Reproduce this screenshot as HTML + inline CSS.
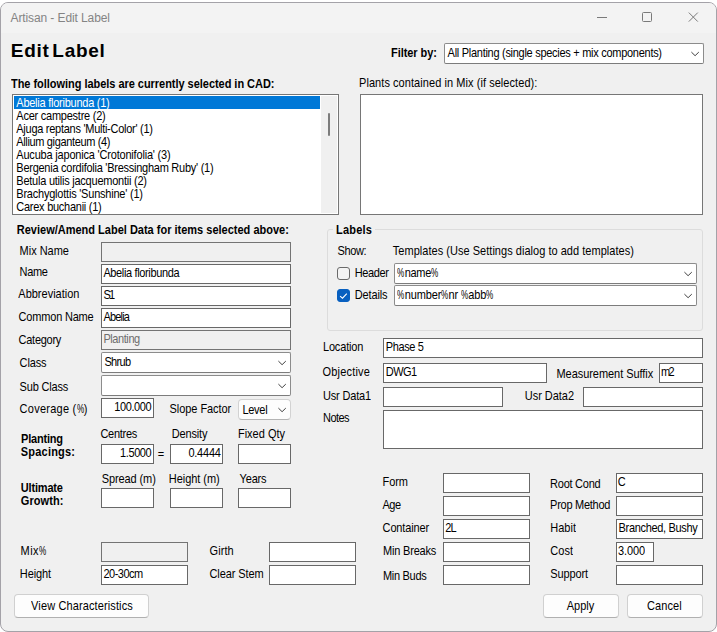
<!DOCTYPE html>
<html><head><meta charset="utf-8"><title>Artisan - Edit Label</title><style>
html,body{margin:0;padding:0;}
body{width:717px;height:632px;overflow:hidden;background:#fff;font-family:"Liberation Sans",sans-serif;font-size:11px;color:#000;position:relative;}
#w{position:absolute;left:0;top:2px;width:717px;height:630px;box-sizing:border-box;background:#f0f0f0;border:1px solid #a4a2a8;border-radius:8px;overflow:hidden;}
#tb{position:absolute;left:0;top:0;width:715px;height:30px;background:#f3f3f3;}
#ct{position:absolute;left:-1px;top:-3px;width:717px;height:632px;}
.l{position:absolute;white-space:nowrap;line-height:13px;}
.s{transform-origin:0 10px;transform:scaleY(1.13);}
.b{font-weight:bold;}
.p{display:inline-block;width:7.34px;transform:scaleX(.74);transform-origin:0 0;}
.i,.c,.c2,.bt,.lb,.gb,.cb{position:absolute;box-sizing:border-box;}
.i{border:1px solid #686868;background:#fff;}
.i.d{background:#f0f0f0;border-color:#747474;}
.c{border:1px solid #8c8c8c;border-bottom-color:#7c7c7c;background:#fff;border-radius:2px;}
.c2{border:1px solid #d2d2d2;border-bottom-color:#b4b4b4;background:#fdfdfd;border-radius:4px;}
.ar{position:absolute;}
.bt{border:1px solid #d0d0d0;border-bottom-color:#b0b0b0;border-radius:4px;background:#fdfdfd;}
.lb{border:1px solid #767676;background:#fff;}
.sel{position:absolute;background:#0078d7;}
.sb{position:absolute;background:#f0f0f0;}
.th{position:absolute;left:7px;top:17px;width:2px;height:23px;background:#7c7c7c;border-radius:1px;}
.gb{border:1px solid #dcdcdc;border-radius:3px;}
.gbl{position:absolute;background:#f0f0f0;}
.cb{border:1px solid #6a6a6a;border-radius:3px;background:#f4f4f4;}
.cb.on{background:#0860c0;border-color:#0860c0;}
</style></head>
<body><div id="w"><div id="tb"></div>
<div id="ct">
<div class="l" style="left:10.50px;top:10px;font-size:12px;line-height:16px;color:#848484;letter-spacing:-0.101px">Artisan - Edit Label</div>
<svg class="ar" style="left:590px;top:8px" width="115" height="18" viewBox="0 0 115 18"><path d="M7 9.5 H17 M53.5 4.5 h7 a1 1 0 0 1 1 1 v7 a1 1 0 0 1 -1 1 h-7 a1 1 0 0 1 -1 -1 v-7 a1 1 0 0 1 1 -1 z M98.8 4.6 l9 9 M107.8 4.6 l-9 9" fill="none" stroke="#7a7a7a" stroke-width="1"/></svg>
<div class="l b" style="left:10.80px;top:40px;letter-spacing:0.710px;font-size:19px;line-height:22px;word-spacing:-3.2px;">Edit Label</div>
<div class="l b s" style="left:391.00px;top:47px;letter-spacing:-0.065px;">Filter by:</div>
<div class="c" style="left:444px;top:43px;width:260px;height:21px;"></div>
<svg class="ar" style="left:689px;top:49px" width="12" height="10" viewBox="0 0 12 10"><path d="M2.4 3.1 L6.1 6.7 L9.8 3.1" fill="none" stroke="#404040" stroke-width="1"/></svg>
<div class="l s" style="left:447.60px;top:47px;letter-spacing:-0.282px;">All Planting (single species + mix components)</div>
<div class="l b s" style="left:11.00px;top:78px;letter-spacing:-0.036px;">The following labels are currently selected in CAD:</div>
<div class="l s" style="left:359.00px;top:77px;letter-spacing:0.062px;">Plants contained in Mix (if selected):</div>
<div class="lb" style="left:12px;top:94px;width:327px;height:121px;"></div>
<div class="sel" style="left:14px;top:96px;width:306px;height:13px;"></div>
<div class="sb" style="left:321px;top:96px;width:16px;height:117px;"><div class="th"></div></div>
<div class="l s" style="left:16.30px;top:97px;letter-spacing:-0.249px;color:#fff;">Abelia floribunda (1)</div>
<div class="l s" style="left:16.30px;top:110px;letter-spacing:-0.239px;">Acer campestre (2)</div>
<div class="l s" style="left:16.30px;top:123px;letter-spacing:-0.272px;">Ajuga reptans 'Multi-Color' (1)</div>
<div class="l s" style="left:16.30px;top:136px;letter-spacing:-0.353px;">Allium giganteum (4)</div>
<div class="l s" style="left:16.30px;top:149px;letter-spacing:-0.193px;">Aucuba japonica 'Crotonifolia' (3)</div>
<div class="l s" style="left:16.30px;top:162px;letter-spacing:-0.257px;">Bergenia cordifolia 'Bressingham Ruby' (1)</div>
<div class="l s" style="left:16.30px;top:175px;letter-spacing:-0.238px;">Betula utilis jacquemontii (2)</div>
<div class="l s" style="left:16.30px;top:188px;letter-spacing:-0.220px;">Brachyglottis 'Sunshine' (1)</div>
<div class="l s" style="left:16.30px;top:201px;letter-spacing:-0.259px;">Carex buchanii (1)</div>
<div class="lb" style="left:360px;top:94px;width:343px;height:121px;"></div>
<div class="l b s" style="left:16.80px;top:224px;">Review/Amend Label Data for items selected above:</div>
<div class="l s" style="left:19.60px;top:245px;letter-spacing:-0.027px;">Mix Name</div>
<div class="i d" style="left:101px;top:242px;width:190px;height:20px;"></div>
<div class="l s" style="left:19.60px;top:266px;letter-spacing:-0.375px;">Name</div>
<div class="i" style="left:101px;top:264px;width:190px;height:20px;"></div>
<div class="l s" style="left:103.40px;top:267px;letter-spacing:-0.364px;">Abelia floribunda</div>
<div class="l s" style="left:18.30px;top:288px;">Abbreviation</div>
<div class="i" style="left:101px;top:286px;width:190px;height:20px;"></div>
<div class="l s" style="left:103.40px;top:289px;letter-spacing:-1.737px;">S1</div>
<div class="l s" style="left:18.60px;top:311px;letter-spacing:-0.190px;">Common Name</div>
<div class="i" style="left:101px;top:308px;width:190px;height:20px;"></div>
<div class="l s" style="left:103.40px;top:311px;letter-spacing:-0.812px;">Abelia</div>
<div class="l s" style="left:18.60px;top:334px;letter-spacing:-0.276px;">Category</div>
<div class="i d" style="left:101px;top:330px;width:190px;height:20px;"></div>
<div class="l s" style="left:103.40px;top:333px;letter-spacing:-0.419px;color:#6d6d6d;">Planting</div>
<div class="l s" style="left:19.60px;top:357px;letter-spacing:-0.151px;">Class</div>
<div class="c" style="left:101px;top:352px;width:190px;height:21px;"></div>
<svg class="ar" style="left:276px;top:358px" width="12" height="10" viewBox="0 0 12 10"><path d="M2.4 3.1 L6.1 6.7 L9.8 3.1" fill="none" stroke="#404040" stroke-width="1"/></svg>
<div class="l s" style="left:104.40px;top:356px;letter-spacing:-0.659px;">Shrub</div>
<div class="l s" style="left:19.60px;top:381px;letter-spacing:-0.179px;">Sub Class</div>
<div class="c" style="left:101px;top:375px;width:190px;height:21px;"></div>
<svg class="ar" style="left:276px;top:381px" width="12" height="10" viewBox="0 0 12 10"><path d="M2.4 3.1 L6.1 6.7 L9.8 3.1" fill="none" stroke="#404040" stroke-width="1"/></svg>
<div class="l s" style="left:19.60px;top:403px;letter-spacing:0.250px;">Coverage (<span class="p">%</span>)</div>
<div class="i" style="left:101px;top:398px;width:53px;height:20px;"></div>
<div class="l s" style="left:114.20px;top:401px;letter-spacing:-0.374px;">100.000</div>
<div class="l s" style="left:169.60px;top:403px;letter-spacing:-0.064px;">Slope Factor</div>
<div class="c2" style="left:238px;top:399px;width:53px;height:21px;"></div>
<svg class="ar" style="left:276px;top:405px" width="12" height="10" viewBox="0 0 12 10"><path d="M2.4 3.1 L6.1 6.7 L9.8 3.1" fill="none" stroke="#404040" stroke-width="1"/></svg>
<div class="l s" style="left:242.40px;top:404px;letter-spacing:-0.263px;">Level</div>
<div class="l b s" style="left:21.10px;top:433px;letter-spacing:-0.210px;">Planting</div>
<div class="l b s" style="left:20.80px;top:446px;letter-spacing:0.200px;">Spacings:</div>
<div class="l s" style="left:100.40px;top:428px;letter-spacing:-0.269px;">Centres</div>
<div class="l s" style="left:171.80px;top:428px;letter-spacing:-0.163px;">Density</div>
<div class="l s" style="left:237.90px;top:428px;letter-spacing:0.017px;">Fixed Qty</div>
<div class="i" style="left:101px;top:444px;width:53px;height:20px;"></div>
<div class="l s" style="left:120.00px;top:447px;letter-spacing:-0.385px;">1.5000</div>
<div class="l s" style="left:157.70px;top:448px;">=</div>
<div class="i" style="left:170px;top:444px;width:53px;height:20px;"></div>
<div class="l s" style="left:188.40px;top:447px;letter-spacing:-0.225px;">0.4444</div>
<div class="i" style="left:238px;top:444px;width:53px;height:20px;"></div>
<div class="l b s" style="left:20.80px;top:482px;letter-spacing:-0.183px;">Ultimate</div>
<div class="l b s" style="left:20.80px;top:495px;letter-spacing:0.084px;">Growth:</div>
<div class="l s" style="left:101.70px;top:473px;letter-spacing:-0.095px;">Spread (m)</div>
<div class="l s" style="left:168.80px;top:473px;letter-spacing:-0.053px;">Height (m)</div>
<div class="l s" style="left:239.60px;top:473px;letter-spacing:-0.206px;">Years</div>
<div class="i" style="left:101px;top:488px;width:53px;height:20px;"></div>
<div class="i" style="left:170px;top:488px;width:53px;height:20px;"></div>
<div class="i" style="left:238px;top:488px;width:53px;height:20px;"></div>
<div class="l s" style="left:20.60px;top:545px;letter-spacing:0.431px;">Mix<span class="p">%</span></div>
<div class="i d" style="left:101px;top:542px;width:87px;height:20px;"></div>
<div class="l s" style="left:209.60px;top:545px;letter-spacing:0.045px;">Girth</div>
<div class="i" style="left:269px;top:542px;width:87px;height:20px;"></div>
<div class="l s" style="left:19.80px;top:568px;letter-spacing:-0.108px;">Height</div>
<div class="i" style="left:101px;top:565px;width:87px;height:20px;"></div>
<div class="l s" style="left:103.40px;top:568px;letter-spacing:-0.489px;">20-30cm</div>
<div class="l s" style="left:209.40px;top:568px;letter-spacing:-0.073px;">Clear Stem</div>
<div class="i" style="left:269px;top:565px;width:87px;height:20px;"></div>
<div class="bt" style="left:14px;top:594px;width:135px;height:24px;"></div>
<div class="l s" style="left:31.10px;top:600px;letter-spacing:0.119px;">View Characteristics</div>
<div class="gb" style="left:327px;top:229px;width:376px;height:102px;"></div>
<div class="gbl" style="left:333px;top:224px;width:42px;height:12px;"></div>
<div class="l b s" style="left:336.10px;top:224px;letter-spacing:0.174px;">Labels</div>
<div class="l s" style="left:337.60px;top:245px;letter-spacing:-0.404px;">Show:</div>
<div class="l s" style="left:392.80px;top:245px;letter-spacing:0.029px;">Templates (Use Settings dialog to add templates)</div>
<div class="cb" style="left:337px;top:267px;width:13px;height:13px;"></div>
<div class="l s" style="left:354.70px;top:267px;letter-spacing:-0.363px;">Header</div>
<div class="c" style="left:394px;top:263px;width:303px;height:21px;"></div>
<svg class="ar" style="left:682px;top:269px" width="12" height="10" viewBox="0 0 12 10"><path d="M2.4 3.1 L6.1 6.7 L9.8 3.1" fill="none" stroke="#404040" stroke-width="1"/></svg>
<div class="l s" style="left:397.40px;top:267px;letter-spacing:-0.291px;"><span class="p">%</span>name<span class="p">%</span></div>
<div class="cb on" style="left:337px;top:289px;width:13px;height:13px;"></div>
<svg class="ar" style="left:337px;top:289px" width="13" height="13" viewBox="0 0 13 13"><path d="M3.1 7.2 L5.5 9.2 L9.8 4.7" fill="none" stroke="#fff" stroke-width="1.1"/></svg>
<div class="l s" style="left:354.70px;top:289px;letter-spacing:-0.121px;">Details</div>
<div class="c" style="left:394px;top:285px;width:303px;height:21px;"></div>
<svg class="ar" style="left:682px;top:291px" width="12" height="10" viewBox="0 0 12 10"><path d="M2.4 3.1 L6.1 6.7 L9.8 3.1" fill="none" stroke="#404040" stroke-width="1"/></svg>
<div class="l s" style="left:397.40px;top:289px;letter-spacing:-0.140px;"><span class="p">%</span>number<span class="p">%</span>nr <span class="p">%</span>abb<span class="p">%</span></div>
<div class="l s" style="left:323.00px;top:341px;letter-spacing:-0.182px;">Location</div>
<div class="i" style="left:383px;top:338px;width:320px;height:20px;"></div>
<div class="l s" style="left:385.80px;top:341px;letter-spacing:-0.391px;">Phase 5</div>
<div class="l s" style="left:322.50px;top:366px;letter-spacing:0.183px;">Objective</div>
<div class="i" style="left:383px;top:363px;width:164px;height:20px;"></div>
<div class="l s" style="left:385.80px;top:366px;letter-spacing:-0.594px;">DWG1</div>
<div class="l s" style="left:556.50px;top:368px;letter-spacing:-0.054px;">Measurement Suffix</div>
<div class="i" style="left:659px;top:363px;width:44px;height:20px;"></div>
<div class="l s" style="left:661.00px;top:366px;letter-spacing:-1.563px;">m2</div>
<div class="l s" style="left:323.00px;top:390px;letter-spacing:-0.175px;">Usr Data1</div>
<div class="i" style="left:383px;top:387px;width:120px;height:20px;"></div>
<div class="l s" style="left:524.80px;top:390px;letter-spacing:-0.037px;">Usr Data2</div>
<div class="i" style="left:583px;top:387px;width:120px;height:20px;"></div>
<div class="l s" style="left:323.00px;top:412px;letter-spacing:-0.534px;">Notes</div>
<div class="i" style="left:383px;top:410px;width:320px;height:39px;"></div>
<div class="l s" style="left:382.60px;top:476px;letter-spacing:-0.133px;">Form</div>
<div class="i" style="left:443px;top:473px;width:87px;height:20px;"></div>
<div class="l s" style="left:550.10px;top:478px;letter-spacing:-0.259px;">Root Cond</div>
<div class="i" style="left:616px;top:473px;width:87px;height:20px;"></div>
<div class="l s" style="left:617.80px;top:476px;">C</div>
<div class="l s" style="left:382.60px;top:499px;letter-spacing:-0.577px;">Age</div>
<div class="i" style="left:443px;top:496px;width:87px;height:20px;"></div>
<div class="l s" style="left:550.10px;top:499px;letter-spacing:-0.266px;">Prop Method</div>
<div class="i" style="left:616px;top:496px;width:87px;height:20px;"></div>
<div class="l s" style="left:382.60px;top:522px;letter-spacing:-0.142px;">Container</div>
<div class="i" style="left:443px;top:519px;width:87px;height:20px;"></div>
<div class="l s" style="left:445.30px;top:522px;letter-spacing:-0.818px;">2L</div>
<div class="l s" style="left:550.30px;top:522px;letter-spacing:-0.006px;">Habit</div>
<div class="i" style="left:616px;top:519px;width:87px;height:20px;"></div>
<div class="l s" style="left:618.60px;top:522px;letter-spacing:-0.334px;">Branched, Bushy</div>
<div class="l s" style="left:383.00px;top:545px;letter-spacing:-0.191px;">Min Breaks</div>
<div class="i" style="left:443px;top:542px;width:87px;height:20px;"></div>
<div class="l s" style="left:550.30px;top:545px;letter-spacing:0.013px;">Cost</div>
<div class="i" style="left:616px;top:542px;width:38px;height:20px;"></div>
<div class="l s" style="left:618.10px;top:545px;letter-spacing:-0.127px;">3.000</div>
<div class="l s" style="left:383.00px;top:570px;letter-spacing:-0.308px;">Min Buds</div>
<div class="i" style="left:443px;top:565px;width:87px;height:20px;"></div>
<div class="l s" style="left:550.30px;top:568px;letter-spacing:-0.128px;">Support</div>
<div class="i" style="left:616px;top:565px;width:87px;height:20px;"></div>
<div class="bt" style="left:543px;top:594px;width:76px;height:24px;"></div>
<div class="l s" style="left:566.70px;top:600px;letter-spacing:0.021px;">Apply</div>
<div class="bt" style="left:627px;top:594px;width:76px;height:24px;"></div>
<div class="l s" style="left:647.00px;top:600px;letter-spacing:0.081px;">Cancel</div>
</div></div></body></html>
